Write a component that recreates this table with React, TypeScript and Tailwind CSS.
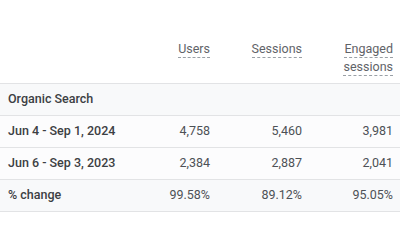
import React from 'react';

const rows = [
  { label: 'Jun 4 - Sep 1, 2024', values: ['4,758', '5,460', '3,981'], bg: 'bg-[#fcfcfd]' },
  { label: 'Jun 6 - Sep 3, 2023', values: ['2,384', '2,887', '2,041'], bg: 'bg-[#fcfcfd]' },
  { label: '% change', values: ['99.58%', '89.12%', '95.05%'], bg: 'bg-[#f8f9fa]' },
];

const cols = 'grid grid-cols-[1fr_92px_92px_91px] pr-[7px]';

export default function App() {
  return (
    <div className="w-[400px] h-[250px] bg-white font-['Roboto',sans-serif] text-[12.5px]">
      {/* Header */}
      <div className={`${cols} items-start h-[84px] pt-[40px] border-b border-[#e2e3e5] text-[#5f6368] leading-[17px]`}>
        <div />
        <div className="flex justify-end">
          <span className="border-b border-dashed border-[#9aa0a6]">Users</span>
        </div>
        <div className="flex justify-end">
          <span className="border-b border-dashed border-[#9aa0a6]">Sessions</span>
        </div>
        <div className="flex flex-col items-end">
          <span className="border-b border-dashed border-[#9aa0a6]">Engaged</span>
          <span className="border-b border-dashed border-[#9aa0a6]">sessions</span>
        </div>
      </div>

      {/* Group row */}
      <div className="h-[32px] flex items-center pl-[8px] bg-[#f8f9fa] border-b border-[#e2e3e5] text-[#3c4043] font-medium">
        Organic Search
      </div>

      {rows.map((r) => (
        <div key={r.label} className={`${cols} h-[32px] items-center pl-[8px] border-b border-[#e2e3e5] ${r.bg}`}>
          <div className="text-[#3c4043] font-medium whitespace-nowrap">{r.label}</div>
          {r.values.map((v, i) => (
            <div key={i} className="text-right text-[#4d5156]">{v}</div>
          ))}
        </div>
      ))}
    </div>
  );
}
